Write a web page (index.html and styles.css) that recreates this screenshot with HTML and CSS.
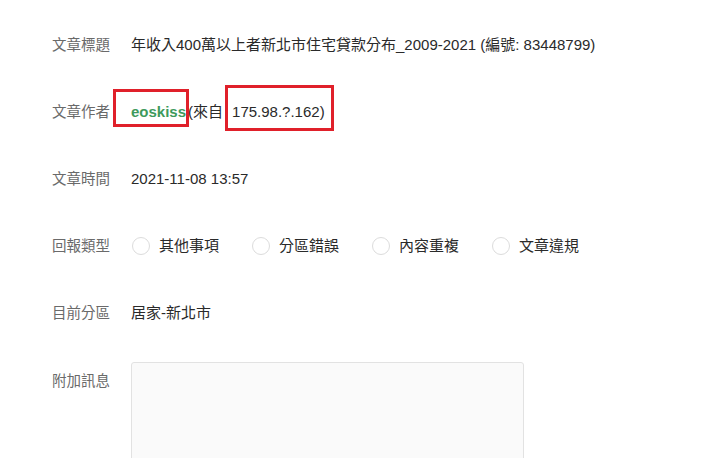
FILE: index.html
```html
<!DOCTYPE html>
<html lang="zh-Hant">
<head>
<meta charset="utf-8">
<link rel="stylesheet" href="styles.css">
</head>
<body>
<div class="form">
  <div class="row">
    <div class="label">文章標題</div>
    <div class="value">年收入400萬以上者新北市住宅貸款分布_2009-2021 (編號: 83448799)</div>
  </div>
  <div class="row">
    <div class="label">文章作者</div>
    <div class="value author">
      <span class="mark mark-user"><span class="user">eoskiss</span></span><span class="from">(來自</span><span class="mark mark-ip"><span class="ip">175.98.?.162)</span></span>
    </div>
  </div>
  <div class="row">
    <div class="label">文章時間</div>
    <div class="value">2021-11-08 13:57</div>
  </div>
  <div class="row">
    <div class="label">回報類型</div>
    <div class="value radios">
      <label class="radio"><span class="circle"></span><span>其他事項</span></label>
      <label class="radio"><span class="circle"></span><span>分區錯誤</span></label>
      <label class="radio"><span class="circle"></span><span>內容重複</span></label>
      <label class="radio"><span class="circle"></span><span>文章違規</span></label>
    </div>
  </div>
  <div class="row">
    <div class="label">目前分區</div>
    <div class="value">居家-新北市</div>
  </div>
  <div class="row row-top">
    <div class="label label-top">附加訊息</div>
    <div class="textarea"></div>
  </div>
</div>
</body>
</html>
```
FILE: styles.css
```css
html, body {
  margin: 0;
  padding: 0;
  background: #fff;
  overflow: hidden;
}
body {
  font-family: "Liberation Sans", "Noto Sans CJK TC", sans-serif;
  font-size: 14.5px;
  color: #333;
}
.form {
  padding: 11px 0 0 52px;
}
.row {
  display: flex;
  align-items: center;
  height: 67px;
}
.row-top {
  align-items: flex-start;
  height: auto;
  margin-top: 16px;
}
.label {
  width: 79px;
  flex: none;
  color: #6a6a6a;
  line-height: 20px;
}
.label-top {
  padding-top: 9px;
}
.value {
  font-size: 15px;
  line-height: 20px;
  color: #2a2a2a;
}
.author {
  display: flex;
  align-items: center;
}
.mark {
  position: relative;
  display: inline-block;
}
.mark::after {
  content: "";
  position: absolute;
  border: 3px solid #e0202a;
  pointer-events: none;
}
.mark-user::after {
  left: -18px;
  right: -3px;
  top: -13px;
  bottom: -5px;
}
.mark-ip::after {
  left: -7px;
  right: -9px;
  top: -17px;
  bottom: -9px;
}
.user {
  color: #3e9a5c;
  font-weight: bold;
}
.from {
  margin-left: 2px;
  margin-right: 9px;
}
.radios {
  display: flex;
}
.radio {
  display: flex;
  align-items: center;
  width: 120px;
}
.circle {
  width: 18px;
  height: 18px;
  border: 1px solid #dcdcdc;
  border-radius: 50%;
  box-sizing: border-box;
  margin-left: 1px;
  margin-right: 9px;
  background: #fff;
}
.textarea {
  width: 393px;
  height: 120px;
  background: #fafafa;
  border: 1px solid #e2e2e2;
  border-radius: 3px;
  box-sizing: border-box;
}
```
